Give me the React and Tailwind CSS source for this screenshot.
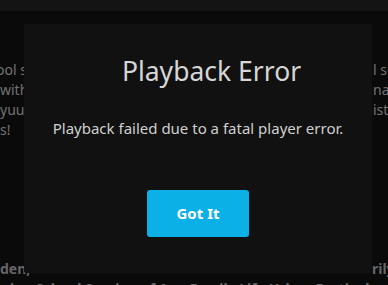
import React from "react";

const BG_LINES = [
  ["ool s", "l se", "-ml-[4px]"],
  ["with", "nai", ""],
  ["yuu", "ist", ""],
  ["s!", "", ""],
];

export default function App() {
  return (
    <div
      className="relative w-[388px] h-[285px] overflow-hidden bg-[#0a0a0a]"
      style={{ fontFamily: '"Noto Sans", "Open Sans", sans-serif' }}
    >
      {/* ---------- PAGE BEHIND ---------- */}
      <div className="h-[11px] bg-[#141414]" />
      <div className="pt-[49px] text-[14px] leading-[20px] text-[#727272]">
        {BG_LINES.map(([l, r, shift], i) => (
          <div key={i} className="flex justify-between whitespace-nowrap">
            <span className={shift}>{l}</span>
            <span className="w-[15px] overflow-hidden">{r}</span>
          </div>
        ))}
      </div>
      <div className="mt-[119px] text-[14px] leading-[20px] font-bold text-[#666666]">
        <div className="flex justify-between whitespace-nowrap">
          <span>den,</span>
          <span className="w-[16px] overflow-hidden">rily</span>
        </div>
        <div className="whitespace-nowrap pl-[10px]">
          ing School Session of Ana Family Life Urban Festival
        </div>
      </div>

      {/* ---------- DIALOG ---------- */}
      <div className="absolute left-[24px] top-[24px] w-[348px] h-[249px] bg-[#111111] rounded-[2px] flex flex-col items-center">
        <h2 className="mt-[29px] pl-[27px] text-[26.5px] leading-[36px] text-[#d6d6d6]">
          Playback Error
        </h2>
        <p className="mt-[29px] text-[15px] leading-[20px] text-[#d0d0d0]">
          Playback failed due to a fatal player error.
        </p>
        <button className="mt-[52px] w-[102px] h-[47px] rounded-[3px] bg-[#0bb0e6] text-white text-[15px] font-bold">
          Got It
        </button>
      </div>
    </div>
  );
}
